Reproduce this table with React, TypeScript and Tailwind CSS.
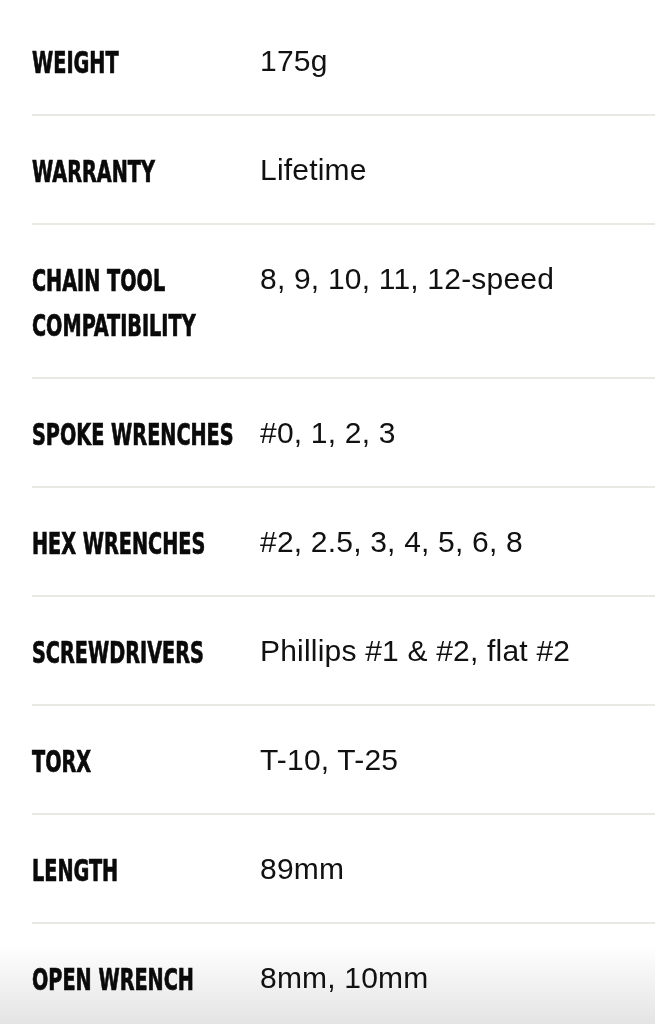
import React from 'react';

const specs: { label: string[]; value: string }[] = [
  { label: ['WEIGHT'], value: '175g' },
  { label: ['WARRANTY'], value: 'Lifetime' },
  { label: ['CHAIN TOOL', 'COMPATIBILITY'], value: '8, 9, 10, 11, 12-speed' },
  { label: ['SPOKE WRENCHES'], value: '#0, 1, 2, 3' },
  { label: ['HEX WRENCHES'], value: '#2, 2.5, 3, 4, 5, 6, 8' },
  { label: ['SCREWDRIVERS'], value: 'Phillips #1 & #2, flat #2' },
  { label: ['TORX'], value: 'T-10, T-25' },
  { label: ['LENGTH'], value: '89mm' },
  { label: ['OPEN WRENCH'], value: '8mm, 10mm' },
];

const App = () => {
  return (
    <div className="relative h-[1024px] overflow-hidden bg-white pl-[32px] pt-[7px]">
      {/* spec table */}
      {specs.map((s, i) => (
        <div
          key={i}
          className={
            'grid grid-cols-[228px_1fr] pt-[33px] pb-[29px] ' +
            (i < specs.length - 1 ? 'border-b-2 border-[#e9e9e4]' : '')
          }
        >
          <div className="font-['DejaVu_Sans_Condensed','DejaVu_Sans',sans-serif] text-[31px] leading-[45px] font-bold text-[#0a0a0a] whitespace-nowrap origin-left scale-x-[0.69] [-webkit-text-stroke:0.7px_#0a0a0a]">
            {s.label.map((l) => (
              <div key={l}>{l}</div>
            ))}
          </div>
          <div className="font-['Liberation_Sans',Arial,sans-serif] text-[30px] leading-[45px] text-[#111] -mt-[2px] tracking-[0.2px]">
            {s.value}
          </div>
        </div>
      ))}

      {/* bottom fade */}
      <div className="pointer-events-none absolute bottom-0 left-0 right-0 h-[80px] bg-gradient-to-b from-white to-[#e4e4e4] mix-blend-multiply" />
    </div>
  );
};

export default App;
